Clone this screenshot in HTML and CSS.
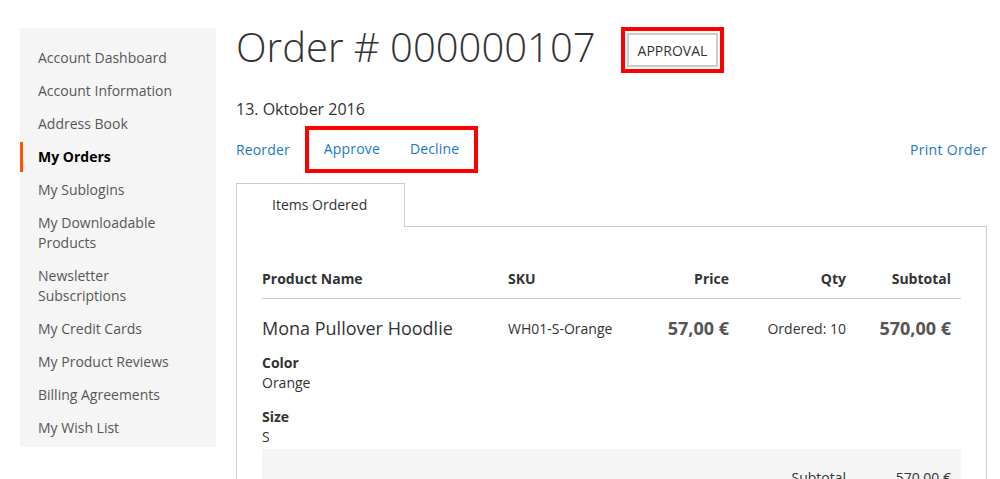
FILE: index.html
```html
<!DOCTYPE html>
<html lang="de">
<head>
    <meta charset="UTF-8">
    <meta name="viewport" content="width=device-width, initial-scale=1.0">
    <title>Order # 000000107</title>
    <link rel="stylesheet" href="styles.css">
</head>
<body>
    <div class="page">
        <aside class="account-nav">
            <ul>
                <li><a href="#">Account Dashboard</a></li>
                <li><a href="#">Account Information</a></li>
                <li><a href="#">Address Book</a></li>
                <li class="current"><strong>My Orders</strong></li>
                <li><a href="#">My Sublogins</a></li>
                <li><a href="#">My Downloadable Products</a></li>
                <li><a href="#">Newsletter Subscriptions</a></li>
                <li><a href="#">My Credit Cards</a></li>
                <li><a href="#">My Product Reviews</a></li>
                <li><a href="#">Billing Agreements</a></li>
                <li><a href="#">My Wish List</a></li>
            </ul>
        </aside>

        <main class="main">
            <div class="title-row">
                <h1>Order # 000000107</h1>
                <span class="highlight badge-wrap"><span class="status">Approval</span></span>
            </div>
            <div class="order-date">13. Oktober 2016</div>

            <div class="order-actions">
                <a href="#">Reorder</a>
                <span class="highlight actions-wrap">
                    <a href="#">Approve</a>
                    <a href="#">Decline</a>
                </span>
                <a href="#" class="print">Print Order</a>
            </div>

            <div class="tabs">
                <div class="tab">Items Ordered</div>
            </div>

            <div class="order-items">
                <table>
                    <colgroup>
                        <col style="width: 236px">
                        <col style="width: 142px">
                        <col style="width: 99px">
                        <col style="width: 117px">
                        <col style="width: 105px">
                    </colgroup>
                    <thead>
                        <tr>
                            <th>Product Name</th>
                            <th>SKU</th>
                            <th class="num">Price</th>
                            <th class="num">Qty</th>
                            <th class="num">Subtotal</th>
                        </tr>
                    </thead>
                    <tbody>
                        <tr>
                            <td class="name">
                                <div class="product-name">Mona Pullover Hoodlie</div>
                                <dl class="options">
                                    <dt>Color</dt>
                                    <dd>Orange</dd>
                                    <dt>Size</dt>
                                    <dd>S</dd>
                                </dl>
                            </td>
                            <td class="small">WH01-S-Orange</td>
                            <td class="num price">57,00 €</td>
                            <td class="num small">Ordered: 10</td>
                            <td class="num price">570,00 €</td>
                        </tr>
                    </tbody>
                    <tfoot>
                        <tr>
                            <th colspan="4" class="num">Subtotal</th>
                            <td class="num">570,00 €</td>
                        </tr>
                        <tr>
                            <th colspan="4" class="num">Shipping &amp; Handling</th>
                            <td class="num">50,00 €</td>
                        </tr>
                    </tfoot>
                </table>
            </div>
        </main>
    </div>
</body>
</html>
```

FILE: styles.css
```css
body {
    margin: 0;
    font-family: "Open Sans", "Liberation Sans", sans-serif;
    font-size: 14px;
    line-height: 20px;
    color: #333;
    background: #fff;
}
a {
    color: #1979c3;
    text-decoration: none;
}
.page {
    display: flex;
    gap: 20px;
    padding: 23px 13px 0 20px;
}

/* sidebar */
.account-nav {
    width: 196px;
    flex: none;
    margin-top: 5px;
    align-self: flex-start;
    background: #f5f5f5;
    padding: 15px 0 4px;
}
.account-nav ul {
    list-style: none;
    margin: 0;
    padding: 0;
}
.account-nav li + li {
    margin-top: 3px;
}
.account-nav a,
.account-nav strong {
    display: block;
    padding: 5px 18px 5px 15px;
    border-left: 3px solid transparent;
    color: #575757;
}
.account-nav .current strong {
    border-left-color: #ff5501;
    color: #000;
    font-weight: 700;
}

/* main column */
.main {
    flex: 1;
    min-width: 0;
}
.title-row {
    display: flex;
    align-items: flex-start;
}
h1 {
    margin: 0;
    font-size: 40px;
    line-height: 48px;
    font-weight: 300;
    color: #333;
}
.highlight {
    border: 4px solid #f00;
}
.badge-wrap {
    margin: 4px 0 0 25px;
    padding: 2px;
}
.status {
    display: block;
    border: 2px solid #ccc;
    padding: 6px 9px 4px;
    text-transform: uppercase;
    color: #333;
}
.order-date {
    margin-top: 24px;
    font-size: 16px;
    line-height: 24px;
}
.order-actions {
    display: flex;
    align-items: center;
    margin-top: 5px;
}
.order-actions a {
    letter-spacing: 0.15px;
}
.actions-wrap {
    display: flex;
    gap: 30px;
    margin-left: 15px;
    padding: 9px 15px 10px;
}
.order-actions .print {
    margin-left: auto;
    letter-spacing: 0.3px;
}

/* tabs */
.tabs {
    display: flex;
    margin-top: 10px;
}
.tabs::after {
    content: "";
    flex: 1;
    border-bottom: 1px solid #ccc;
}
.tab {
    border: 1px solid #ccc;
    border-bottom: 0;
    padding: 11px 37px 12px 35px;
    line-height: 20px;
    color: #333;
}
.order-items {
    border: 1px solid #ccc;
    border-top: 0;
    padding: 25px 25px 20px;
}
table {
    width: 100%;
    border-collapse: collapse;
    table-layout: fixed;
}
th {
    font-weight: 700;
    text-align: left;
}
thead th {
    padding: 17px 10px 9px;
    border-bottom: 1px solid #ccc;
}
thead th:first-child,
tbody td:first-child {
    padding-left: 0;
}
.num {
    text-align: right;
}
tbody td {
    vertical-align: top;
    padding: 20px 10px 2px;
}
tbody td.name,
tbody td.price {
    padding-top: 16px;
}
.product-name {
    font-size: 18px;
    line-height: 26px;
}
.price {
    font-size: 18px;
    line-height: 26px;
    font-weight: 700;
    color: #555;
}
.options {
    margin: 12px 0 0;
}
.options dt {
    font-weight: 700;
}
.options dd {
    margin: 0 0 14px;
}
.options dd:last-child {
    margin-bottom: 0;
}
tfoot {
    background: #f5f5f5;
}
tfoot th,
tfoot td {
    font-weight: 400;
    padding: 19px 10px 5px;
}
```
